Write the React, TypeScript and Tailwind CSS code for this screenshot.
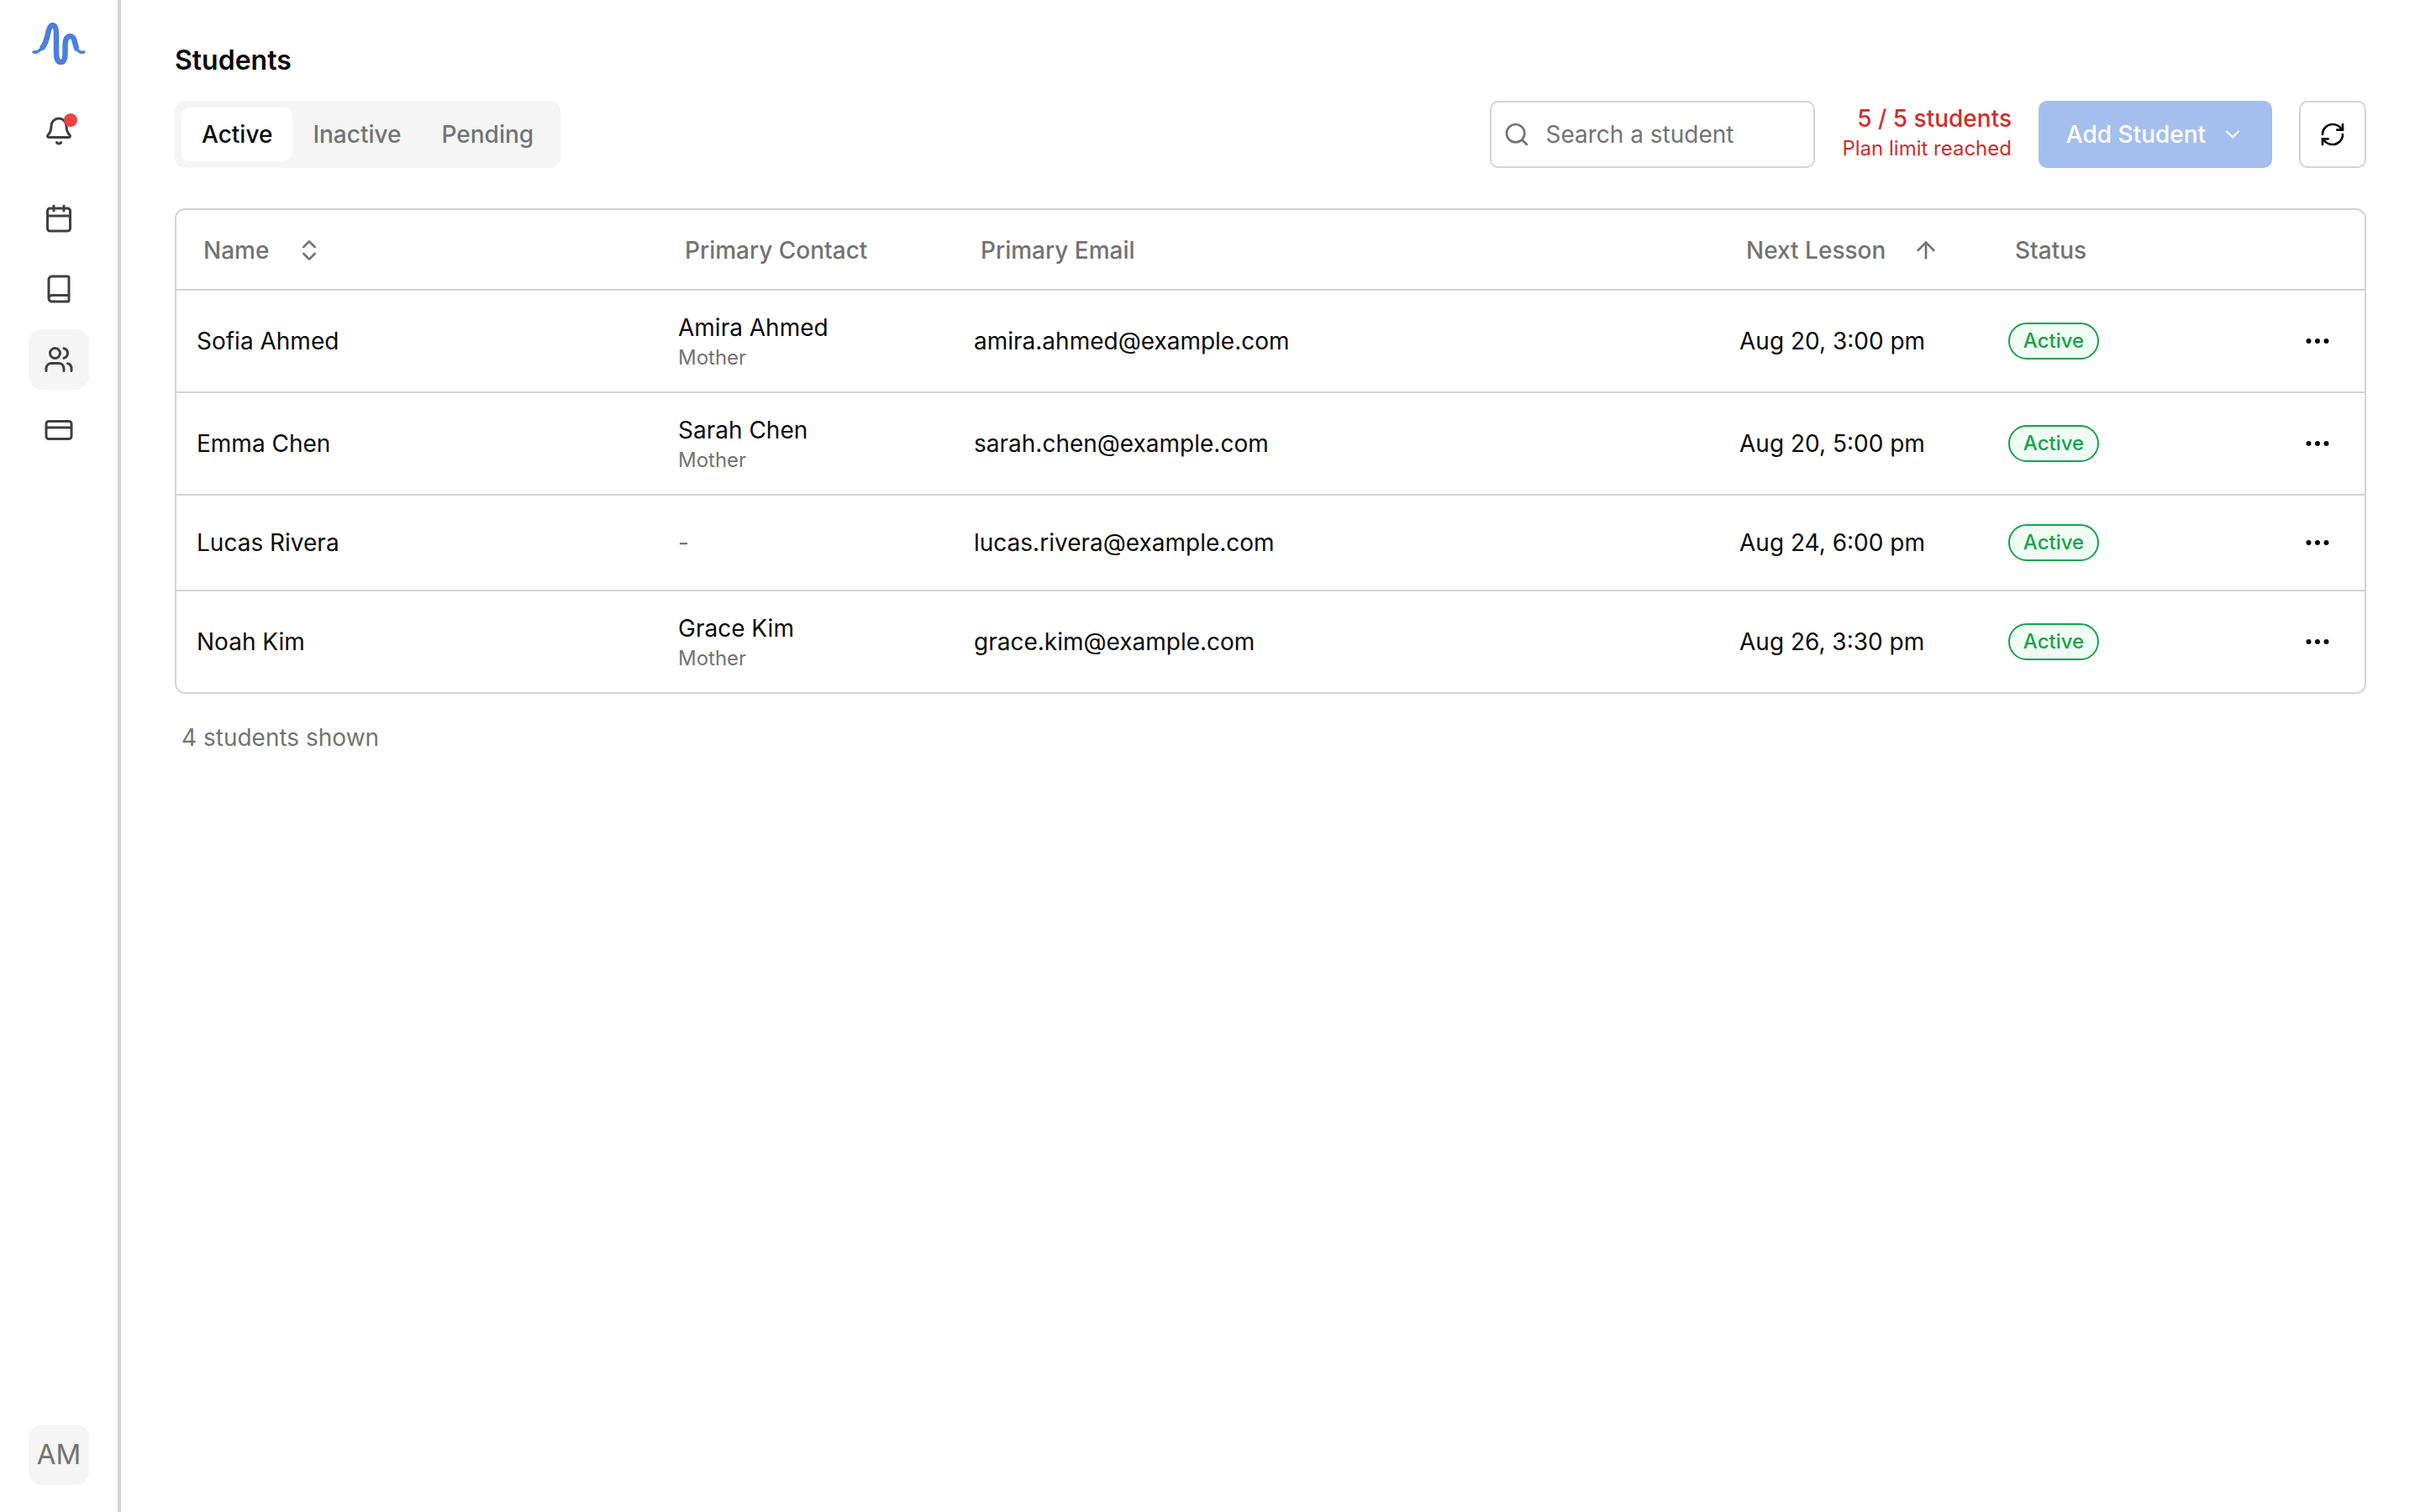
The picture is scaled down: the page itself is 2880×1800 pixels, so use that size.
import { Bell, Calendar, Book, Users, CreditCard, Search, ChevronDown, ChevronsUpDown, ArrowUp, RefreshCw, Ellipsis } from 'lucide-react'

const students = [
  { name: 'Sofia Ahmed', contact: 'Amira Ahmed', relation: 'Mother', email: 'amira.ahmed@example.com', lesson: 'Aug 20, 3:00 pm' },
  { name: 'Emma Chen', contact: 'Sarah Chen', relation: 'Mother', email: 'sarah.chen@example.com', lesson: 'Aug 20, 5:00 pm' },
  { name: 'Lucas Rivera', contact: '', relation: '', email: 'lucas.rivera@example.com', lesson: 'Aug 24, 6:00 pm' },
  { name: 'Noah Kim', contact: 'Grace Kim', relation: 'Mother', email: 'grace.kim@example.com', lesson: 'Aug 26, 3:30 pm' },
]

function NavItem({ icon: Icon, active }: { icon: typeof Bell; active?: boolean }) {
  return (
    <button className={`flex h-[72px] w-[72px] items-center justify-center rounded-[16px] text-[#404040] ${active ? 'bg-[#f5f5f5]' : ''}`}>
      <Icon size={36} strokeWidth={2} />
    </button>
  )
}

function Logo() {
  return (
    <svg width="64" height="50" viewBox="0 0 64 50" fill="none" className="text-[#4a7fdf]">
      <path d="M11 31C16 27 18 18 19 13C20.500 6 22 3 24.500 3C28 3 29 7 29 14L29 36C29 43 31 47 34.500 47C38 47 39.500 43 39.500 36L39.500 26C39.500 20 42 16 45.500 16C49 16 50.500 20 51.500 25C52.500 29 53 31 54 32" stroke="currentColor" strokeWidth="6.500" />
      <path d="M1 34C4 36.500 8 34.500 12 30" stroke="currentColor" strokeWidth="3.500" />
      <path d="M53 31C56 35.500 60 36.500 63 34" stroke="currentColor" strokeWidth="3.500" />
    </svg>
  )
}

function Sidebar() {
  return (
    <aside className="flex w-[144px] shrink-0 flex-col items-center justify-between border-r-[4px] border-[#d4d4d4] pb-[32px]">
      <div className="flex flex-col items-center">
        <div className="flex h-[104px] items-center justify-center">
          <Logo />
        </div>
        <div className="relative mt-[16px]">
          <NavItem icon={Bell} />
          <span className="absolute left-[42px] top-[15px] h-[16px] w-[16px] rounded-full bg-[#ef4444]" />
        </div>
        <div className="mt-[32px] flex flex-col gap-[12px]">
          <NavItem icon={Calendar} />
          <NavItem icon={Book} />
          <NavItem icon={Users} active />
          <NavItem icon={CreditCard} />
        </div>
      </div>
      <div className="flex h-[72px] w-[72px] items-center justify-center rounded-[16px] bg-[#f5f5f5] text-[33px] text-[#737373]">AM</div>
    </aside>
  )
}

function Toolbar() {
  return (
    <div className="mt-[26px] flex items-center justify-between">
      <div className="flex h-[80px] items-center rounded-[12px] bg-[#f5f5f5] p-[8px] text-[28px] font-medium">
        <button className="flex h-[64px] items-center rounded-[10px] bg-white px-[24px] text-[#0a0a0a]">Active</button>
        <button className="flex h-[64px] items-center px-[24px] text-[#737373]">Inactive</button>
        <button className="flex h-[64px] items-center px-[24px] text-[#737373]">Pending</button>
      </div>
      <div className="flex items-center gap-[32px]">
        <div className="flex h-[80px] w-[387px] items-center gap-[18px] rounded-[10px] border-2 border-[#d4d4d4] bg-white px-[14px]">
          <Search size={32} className="text-[#737373]" />
          <span className="text-[28px] text-[#737373]">Search a student</span>
        </div>
        <div className="mb-[6px] flex flex-col items-end">
          <span className="text-[28px] leading-[40px] font-medium text-[#d22c2c]">5 / 5 students</span>
          <span className="text-[24px] leading-[32px] text-[#d22c2c]">Plan limit reached</span>
        </div>
        <button className="flex h-[80px] w-[278px] items-center justify-center gap-[18px] rounded-[10px] bg-[#a4bfee] text-[28px] font-medium text-white">
          Add Student
          <ChevronDown size={28} />
        </button>
        <button className="flex h-[80px] w-[80px] items-center justify-center rounded-[10px] border-2 border-[#d4d4d4] bg-white text-[#0a0a0a]">
          <RefreshCw size={32} />
        </button>
      </div>
    </div>
  )
}

function StudentTable() {
  return (
    <div className="mt-[48px] overflow-hidden rounded-[12px] border-2 border-[#d4d4d4]">
      <table className="w-full table-fixed border-collapse text-left">
        <thead>
          <tr className="border-b-2 border-[#d4d4d4] text-[28px] text-[#737373]">
            <th className="h-[95px] w-[573px] pt-[2px] pl-[32px] font-medium">
              <span className="flex items-center gap-[32px]">Name <ChevronsUpDown size={32} /></span>
            </th>
            <th className="w-[352px] pt-[2px] pl-[32px] font-medium">Primary Contact</th>
            <th className="w-[911px] pt-[2px] pl-[32px] font-medium">Primary Email</th>
            <th className="w-[320px] pt-[2px] pl-[32px] font-medium">
              <span className="flex items-center gap-[32px]">Next Lesson <ArrowUp size={32} /></span>
            </th>
            <th className="pt-[2px] pl-[32px] font-medium">Status</th>
          </tr>
        </thead>
        <tbody className="text-[28px] text-[#0a0a0a]">
          {students.map((s, i) => (
            <tr key={s.email} className={i < students.length - 1 ? 'border-b-2 border-[#d4d4d4]' : ''}>
              <td className="py-[24px] pl-[24px]">{s.name}</td>
              <td className="py-[24px] pl-[24px]">
                {s.contact ? (
                  <div>
                    <div className="leading-[40px]">{s.contact}</div>
                    <div className="text-[24px] leading-[32px] text-[#737373]">{s.relation}</div>
                  </div>
                ) : (
                  <span className="text-[#737373]">-</span>
                )}
              </td>
              <td className="py-[24px] pl-[24px]">{s.email}</td>
              <td className="py-[24px] pl-[24px]">{s.lesson}</td>
              <td className="py-[24px] pl-[24px]">
                <div className="flex items-center justify-between pr-[38px]">
                  <span className="flex h-[44px] w-[108px] items-center justify-center rounded-full border-2 border-[#16a34a] bg-[#f0fdf4] text-[24px] font-medium text-[#16a34a]">Active</span>
                  <button className="flex h-[64px] items-center justify-center">
                    <Ellipsis size={36} />
                  </button>
                </div>
              </td>
            </tr>
          ))}
        </tbody>
      </table>
    </div>
  )
}

export default function App() {
  return (
    <div className="flex h-[1800px] bg-white font-['Inter',sans-serif]">
      <Sidebar />
      <main className="flex-1 px-[64px] pt-[50px]">
        <h1 className="text-[32px] leading-[44px] font-semibold text-[#0a0a0a]">Students</h1>
        <Toolbar />
        <StudentTable />
        <p className="mt-[32px] pl-[8px] text-[28px] leading-[40px] text-[#737373]">4 students shown</p>
      </main>
    </div>
  )
}
